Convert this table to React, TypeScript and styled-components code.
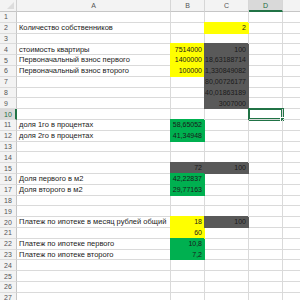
import React from "react";
import styled, { createGlobalStyle, css } from "styled-components";

type Fill = "yellow" | "dark" | "green";

const fillColors: Record<Fill, string> = {
    yellow: "#ffff00",
    dark: "#595959",
    green: "#00b050",
};

const GlobalStyle = createGlobalStyle`
    html, body {
        margin: 0;
        padding: 0;
        background: #ffffff;
    }
    body {
        width: 300px;
        height: 300px;
        overflow: hidden;
        font-family: "Liberation Sans", Arial, sans-serif;
    }
`;

const Sheet = styled.div`
    display: grid;
    grid-template-columns: 17px 154px 34px 44px 34px 40px;
    grid-template-rows: 12px;
    grid-auto-rows: 10.8px;
    width: 300px;
    height: 300px;
    overflow: hidden;
    background: #ffffff;
`;

const Corner = styled.div`
    display: flex;
    align-items: flex-end;
    justify-content: flex-end;
    padding: 0 2px 2px 0;
    background: #f3f3f3;
    border-right: 1px solid #d0d0d0;
    border-bottom: 1px solid #c6c6c6;
    box-sizing: border-box;
`;

const SelectAll = styled.div`
    width: 0;
    height: 0;
    border-left: 7px solid transparent;
    border-bottom: 7px solid #dcdcdc;
`;

const ColHead = styled.div<{ $selected?: boolean }>`
    display: flex;
    align-items: center;
    justify-content: center;
    background: ${p => (p.$selected ? "#d9d9d9" : "#f3f3f3")};
    color: ${p => (p.$selected ? "#1e6b40" : "#555555")};
    font-size: 7px;
    border-right: 1px solid #d6d6d6;
    border-bottom: ${p => (p.$selected ? "2px solid #217346" : "1px solid #c6c6c6")};
    box-sizing: border-box;
`;

const RowHead = styled.div<{ $selected?: boolean }>`
    display: flex;
    align-items: center;
    padding-left: 4px;
    background: ${p => (p.$selected ? "#d9d9d9" : "#f3f3f3")};
    color: ${p => (p.$selected ? "#1e6b40" : "#555555")};
    font-size: 7px;
    border-right: ${p => (p.$selected ? "2px solid #217346" : "1px solid #c6c6c6")};
    border-bottom: 1px solid #dcdcdc;
    box-sizing: border-box;
`;

const Cell = styled.div<{ $fill?: Fill; $numeric?: boolean; $selected?: boolean }>`
    position: relative;
    display: flex;
    align-items: flex-end;
    justify-content: ${p => (p.$numeric ? "flex-end" : "flex-start")};
    padding: 0 2px 0 2px;
    font-size: ${p => (p.$numeric ? "7px" : "7.5px")};
    line-height: 9.5px;
    color: #1a1a1a;
    white-space: nowrap;
    box-sizing: border-box;
    border-right: 1px solid #dadada;
    border-bottom: 1px solid #dadada;

    ${p =>
        p.$fill &&
        css`
            background: ${fillColors[p.$fill]};
            border-color: ${fillColors[p.$fill]};
            box-shadow: -1px -1px 0 0 ${fillColors[p.$fill]}, -1px 0 0 0 ${fillColors[p.$fill]};
        `}

    ${p =>
        p.$selected &&
        css`
            box-shadow: 0 0 0 1px #217346, inset 0 0 0 1px #217346;

            &::after {
                content: "";
                position: absolute;
                right: -3px;
                bottom: -3px;
                width: 3px;
                height: 3px;
                background: #217346;
                border: 1px solid #ffffff;
            }
        `}
`;

type CellData = { v: string; fill?: Fill };

const labels: Record<number, string> = {
    2: "Количество собственников",
    4: "стоимость квартиры",
    5: "Первоначальный взнос первого",
    6: "Первоначальный взнос второго",
    11: "доля 1го в процентах",
    12: "доля 2го в процентах",
    16: "Доля первого в м2",
    17: "Доля второго в м2",
    20: "Платеж по ипотеке в месяц рублей общий",
    22: "Платеж по ипотеке первого",
    23: "Платеж по ипотеке второго",
};

const values: Record<string, CellData> = {
    C2: { v: "2", fill: "yellow" },
    B4: { v: "7514000", fill: "yellow" },
    B5: { v: "1400000", fill: "yellow" },
    B6: { v: "100000", fill: "yellow" },
    C4: { v: "100", fill: "dark" },
    C5: { v: "18,63188714", fill: "dark" },
    C6: { v: "1,330849082", fill: "dark" },
    C7: { v: "80,00726177", fill: "dark" },
    C8: { v: "40,01863189", fill: "dark" },
    C9: { v: "3007000", fill: "dark" },
    B11: { v: "58,65052", fill: "green" },
    B12: { v: "41,34948", fill: "green" },
    B15: { v: "72", fill: "dark" },
    C15: { v: "100", fill: "dark" },
    B16: { v: "42,22837", fill: "green" },
    B17: { v: "29,77163", fill: "green" },
    B20: { v: "18", fill: "yellow" },
    C20: { v: "100", fill: "dark" },
    B21: { v: "60", fill: "yellow" },
    B22: { v: "10,8", fill: "green" },
    B23: { v: "7,2", fill: "green" },
};

const columns = ["A", "B", "C", "D", "E"];
const rows = Array.from({ length: 28 }, (_, i) => i + 1);
const selected = { col: "D", row: 10 };

export default function App() {
    return (
        <>
            <GlobalStyle />
            <Sheet>
                <Corner><SelectAll /></Corner>
                {columns.map(c => (
                    <ColHead key={c} $selected={c === selected.col}>{c === "E" ? "" : c}</ColHead>
                ))}
                {rows.map(r => (
                    <React.Fragment key={r}>
                        <RowHead $selected={r === selected.row}>{r}</RowHead>
                        {columns.map(c => {
                            const id = `${c}${r}`;
                            const data = values[id];
                            if (c === "A") {
                                return <Cell key={id}>{labels[r] ?? ""}</Cell>;
                            }
                            return (
                                <Cell
                                    key={id}
                                    $numeric
                                    $fill={data?.fill}
                                    $selected={c === selected.col && r === selected.row}
                                >
                                    {data?.v ?? ""}
                                </Cell>
                            );
                        })}
                    </React.Fragment>
                ))}
            </Sheet>
        </>
    );
}
